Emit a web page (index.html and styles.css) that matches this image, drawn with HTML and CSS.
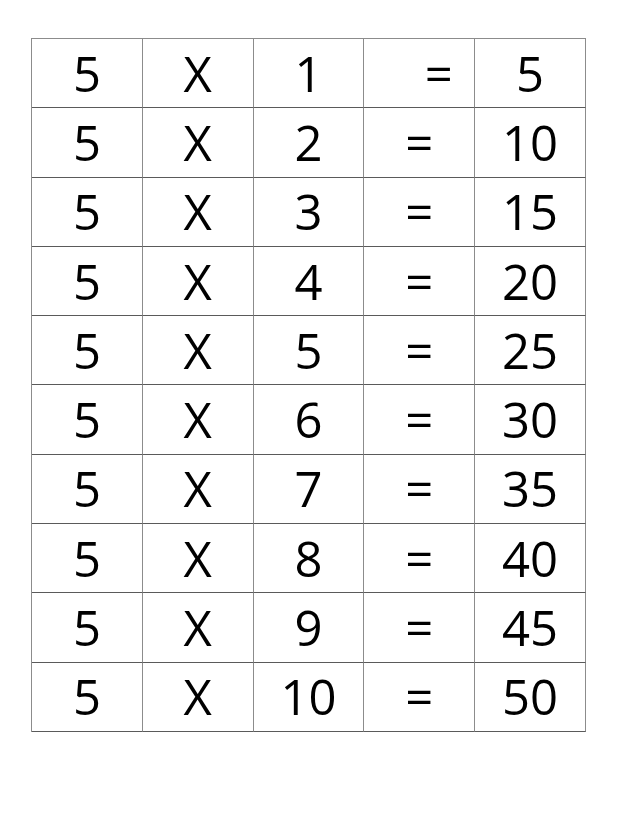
FILE: index.html
```html
<!DOCTYPE html>
<html>
<head>
<meta charset="utf-8">
<link rel="stylesheet" href="styles.css">
</head>
<body>
<div class="sheet">
  <div class="table">
    <div class="c">5</div><div class="c">X</div><div class="c">1</div><div class="c eq first">=</div><div class="c">5</div>
    <div class="c">5</div><div class="c">X</div><div class="c">2</div><div class="c eq">=</div><div class="c">10</div>
    <div class="c">5</div><div class="c">X</div><div class="c">3</div><div class="c eq">=</div><div class="c">15</div>
    <div class="c">5</div><div class="c">X</div><div class="c">4</div><div class="c eq">=</div><div class="c">20</div>
    <div class="c">5</div><div class="c">X</div><div class="c">5</div><div class="c eq">=</div><div class="c">25</div>
    <div class="c">5</div><div class="c">X</div><div class="c">6</div><div class="c eq">=</div><div class="c">30</div>
    <div class="c">5</div><div class="c">X</div><div class="c">7</div><div class="c eq">=</div><div class="c">35</div>
    <div class="c">5</div><div class="c">X</div><div class="c">8</div><div class="c eq">=</div><div class="c">40</div>
    <div class="c">5</div><div class="c">X</div><div class="c">9</div><div class="c eq">=</div><div class="c">45</div>
    <div class="c">5</div><div class="c">X</div><div class="c">10</div><div class="c eq">=</div><div class="c">50</div>
  </div>
</div>
</body>
</html>
```
FILE: styles.css
```css
html, body {
  margin: 0;
  padding: 0;
  background: #ffffff;
}
.sheet {
  padding: 38px 0 0 31px;
}
.table {
  display: grid;
  grid-template-columns: repeat(5, 110.8px);
  grid-template-rows: repeat(10, 69.3px);
  width: max-content;
  border-top: 1px solid #8c8c8c;
  border-left: 1px solid #8c8c8c;
  font-family: "Open Sans", "Liberation Sans", sans-serif;
  font-size: 49px;
  color: #000;
}
.c {
  box-sizing: border-box;
  border-right: 1px solid #8c8c8c;
  border-bottom: 1px solid #5a5a5a;
  display: flex;
  align-items: center;
  justify-content: center;
  line-height: 1;
}
.first {
  padding-left: 39px;
}
```
